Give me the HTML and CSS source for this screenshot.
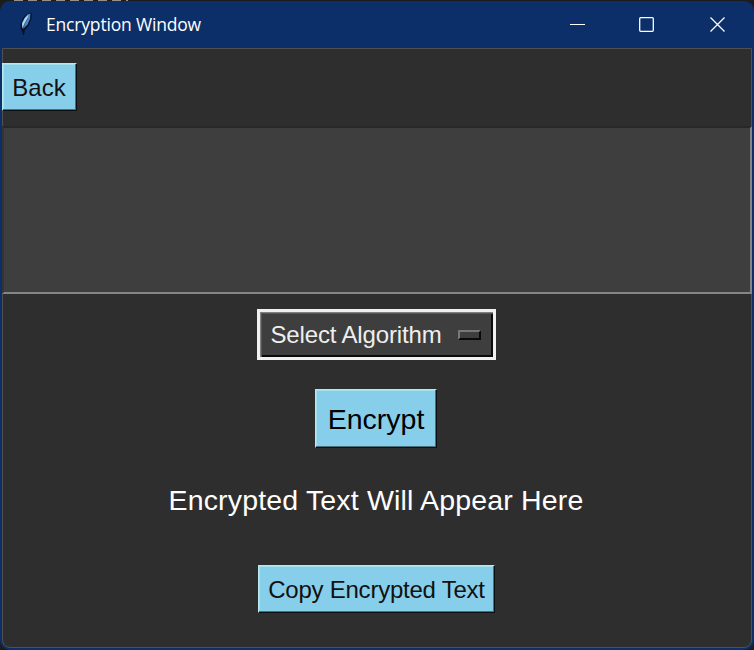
FILE: index.html
```html
<!DOCTYPE html>
<html lang="en">
<head>
<meta charset="utf-8">
<title>Encryption Window</title>
<link rel="stylesheet" href="styles.css">
</head>
<body>
<div class="backdrop"></div>
<main class="window">
  <header class="titlebar">
    <svg class="feather" width="16" height="24" viewBox="0 0 16 24">
      <path d="M5 23 4 19 2.500 17 2.500 12 5 6 8 2.500 13 .5 14 3 13 8 10.500 14 7 18 6 23Z" fill="#06122a"/>
      <path d="M4 16 4 11 6.500 6 9.500 2.500 12.500 1.500 12 7 9.500 12.500 6 16Z" fill="#4a86c6"/>
      <path d="M4 15 4.300 11 7 6 10.500 2.500 9 8 6 13Z" fill="#b5d6e8"/>
      <path d="M10 6 7 11 5 17" fill="none" stroke="#28588f" stroke-width=".8"/>
    </svg>
    <h1 class="title">Encryption Window</h1>
    <div class="controls">
      <svg width="16" height="16" viewBox="0 0 16 16"><path d="M0 8.500H15" stroke="#fff"/></svg>
      <svg width="16" height="16" viewBox="0 0 16 16"><rect x=".7" y="1.700" width="13.600" height="13.600" rx="1" fill="none" stroke="#fff" stroke-width="1.300"/></svg>
      <svg width="16" height="16" viewBox="0 0 16 16"><path d="M.5 1.500 14.500 15.500M14.500 1.500 .5 15.500" stroke="#fff" stroke-width="1.300"/></svg>
    </div>
  </header>
  <section class="client">
    <button class="button back"><span>Back</span></button>
    <textarea class="entry" aria-label="Text"></textarea>
    <button class="select"><span>Select Algorithm</span><i class="indicator"></i></button>
    <button class="button encrypt"><span>Encrypt</span></button>
    <p class="result">Encrypted Text Will Appear Here</p>
    <button class="button copy"><span>Copy Encrypted Text</span></button>
  </section>
</main>
</body>
</html>
```
FILE: styles.css
```css
* { box-sizing: border-box; }
body {
  margin: 0;
  width: 754px;
  height: 650px;
  overflow: hidden;
  background: #1c1c1c;
  font-family: "Liberation Sans", Arial, sans-serif;
}
.backdrop {
  height: 1px;
  margin-left: 14px;
  width: 114px;
  background: repeating-linear-gradient(90deg, #98918a 0 9px, #1c1c1c 9px 14px);
}
.window {
  width: 754px;
  height: 649px;
  padding: 0 2px 2px;
  border-radius: 10px;
  background: #0c2f69;
  overflow: hidden;
}
.titlebar {
  display: flex;
  align-items: center;
  height: 47px;
  padding: 0 0 2px 16px;
}
.title {
  margin: 0 0 0 12px;
  color: #fff;
  font: 400 17.500px/24px "Open Sans", "Noto Sans", sans-serif;
  letter-spacing: -0.18px;
  white-space: nowrap;
}
.controls {
  display: flex;
  gap: 54px;
  margin: 0 26px 0 auto;
}
.controls svg:nth-child(2) { margin: 0 1px 0 -1px; }
.client {
  display: flex;
  flex-direction: column;
  align-items: center;
  height: 600px;
  border: 1px solid #505050;
  border-radius: 0 0 8px 8px;
  background: #2e2e2e;
}
.button, .select {
  flex: none;
  display: flex;
  align-items: center;
  justify-content: center;
  padding: 0;
  margin: 0;
  font-family: inherit;
  white-space: nowrap;
}
.button {
  padding-top: 1px;
  border: 1px solid;
  border-color: #b5e9ee #0a0f12 #0a0f12 #b5e9ee;
  box-shadow: inset -1px -1px #48707f, inset 1px 1px #a2dfec;
  background: #87ceeb;
  color: #111;
}
.back {
  align-self: flex-start;
  width: 75px;
  height: 48px;
  margin: 14px 0 0 -1px;
  padding-right: 1px;
  font-size: 24px;
}
.entry {
  flex: none;
  width: 750px;
  height: 168px;
  margin: 15px -1px 0;
  padding: 8px;
  border: 2px solid;
  border-color: #282828 #858585 #858585 #343434;
  background: #3e3e3e;
  color: #fff;
  resize: none;
  outline: none;
}
.select {
  justify-content: space-between;
  width: 239px;
  height: 51px;
  margin: 15px 2px 0 0;
  padding: 0 12px 0 11px;
  border: 3px solid #f0f0f0;
  box-shadow: inset 1px 1px #808080, inset 2px 2px #555, inset -2px -2px #0a0a0a;
  background: #3e3e3e;
  color: #eee;
  font-size: 24px;
  letter-spacing: -0.15px;
}
.indicator {
  width: 23px;
  height: 10px;
  border: 2px solid;
  border-color: #777 #0a0a0a #0a0a0a #777;
}
.encrypt {
  width: 122px;
  height: 59px;
  margin: 29px 2px 0 0;
  color: #000;
  font-size: 28.500px;
}
.result {
  margin: 36px 2px 0 0;
  color: #fff;
  font-size: 28.500px;
  line-height: 32px;
  letter-spacing: 0.17px;
  white-space: nowrap;
}
.copy {
  width: 237px;
  height: 48px;
  margin: 49px 1px 0 0;
  font-size: 24px;
  letter-spacing: -0.23px;
}
```
